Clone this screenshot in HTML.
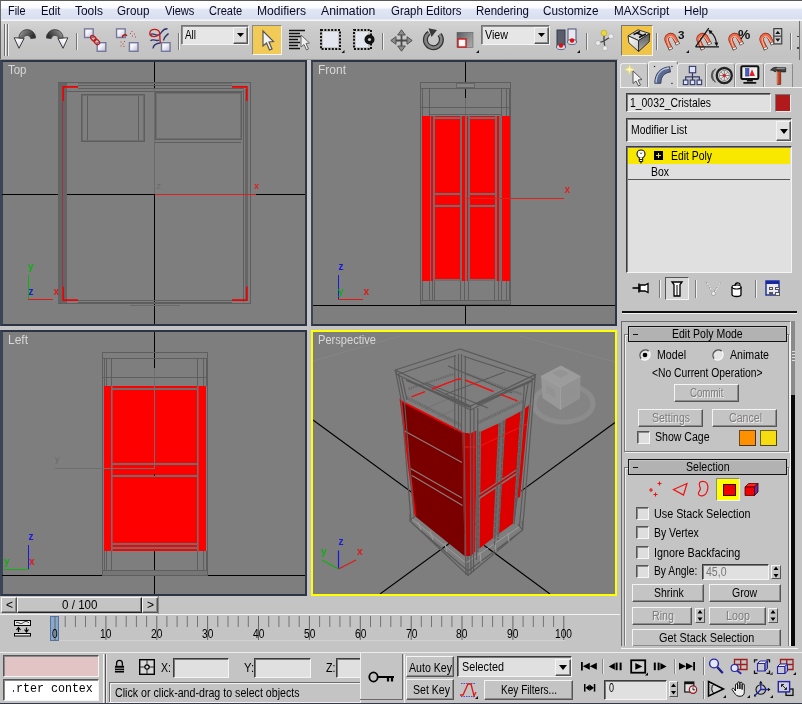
<!DOCTYPE html>
<html><head><meta charset="utf-8"><title>3ds Max</title>
<style>
*{box-sizing:border-box;margin:0;padding:0}
html,body{width:802px;height:704px;overflow:hidden;background:#c4c4c4;font-family:"Liberation Sans",sans-serif;font-size:12px;color:#000}
body{position:relative}
.t{position:absolute;white-space:nowrap;transform-origin:0 0;line-height:1.149}
.dis{color:#7c7c7c;text-shadow:1px 1px 0 #eee}
svg{position:absolute;overflow:visible}
.btn{background:#c4c4c4;border:1px solid;border-color:#f4f4f4 #555 #555 #f4f4f4;box-shadow:inset -1px -1px 0 #8c8c8c}
.sunk{background:#e0e0e0;border:1px solid;border-color:#3c3c3c #f4f4f4 #f4f4f4 #3c3c3c;box-shadow:inset 1px 1px 0 #7a7a7a}
.chk{background:#dedede;border:1px solid;border-color:#555 #f6f6f6 #f6f6f6 #555;box-shadow:inset 1px 1px 0 #8a8a8a}
.vp{position:absolute;background:#7e7e7e;overflow:hidden}
#all{position:absolute;left:0;top:0;width:802px;height:704px;will-change:transform}

</style></head><body>
<div id="all">
<div class="" style="position:absolute;left:0px;top:0px;width:802px;height:21px;background:linear-gradient(#fff 0%,#fafbfe 34%,#e2e7f5 42%,#d9dff0 88%,#f2f4f9 96%,#f6f7fa 100%);border-top:1px solid #5a5a5a;border-left:1px solid #6a6a6a"></div>
<span class="t " style="left:8.2px;top:4.6px;font-size:12px;color:#0a0a24;transform:scaleX(0.905);">File</span>
<span class="t " style="left:40.6px;top:4.6px;font-size:12px;color:#0a0a24;transform:scaleX(0.933);">Edit</span>
<span class="t " style="left:74.8px;top:4.6px;font-size:12px;color:#0a0a24;transform:scaleX(0.996);">Tools</span>
<span class="t " style="left:117.2px;top:4.6px;font-size:12px;color:#0a0a24;transform:scaleX(0.971);">Group</span>
<span class="t " style="left:164.6px;top:4.6px;font-size:12px;color:#0a0a24;transform:scaleX(0.925);">Views</span>
<span class="t " style="left:208.7px;top:4.6px;font-size:12px;color:#0a0a24;transform:scaleX(0.922);">Create</span>
<span class="t " style="left:256.9px;top:4.6px;font-size:12px;color:#0a0a24;transform:scaleX(1.009);">Modifiers</span>
<span class="t " style="left:321.0px;top:4.6px;font-size:12px;color:#0a0a24;transform:scaleX(1.018);">Animation</span>
<span class="t " style="left:390.5px;top:4.6px;font-size:12px;color:#0a0a24;transform:scaleX(0.952);">Graph Editors</span>
<span class="t " style="left:476.0px;top:4.6px;font-size:12px;color:#0a0a24;transform:scaleX(0.955);">Rendering</span>
<span class="t " style="left:543.3px;top:4.6px;font-size:12px;color:#0a0a24;transform:scaleX(0.979);">Customize</span>
<span class="t " style="left:613.8px;top:4.6px;font-size:12px;color:#0a0a24;transform:scaleX(0.974);">MAXScript</span>
<span class="t " style="left:683.8px;top:4.6px;font-size:12px;color:#0a0a24;transform:scaleX(0.977);">Help</span>
<div class="" style="position:absolute;left:0px;top:21px;width:802px;height:38px;background:linear-gradient(#d4d4d4 0%,#cacaca 30%,#c2c2c2 100%);border-left:1px solid #666"></div>
<div class="" style="position:absolute;left:0px;top:59px;width:618px;height:1px;background:#9a9a9a"></div>
<div class="" style="position:absolute;left:4px;top:24px;width:1px;height:32px;background:#6e6e6e"></div>
<div class="" style="position:absolute;left:5px;top:24px;width:1px;height:32px;background:#f2f2f2"></div>
<div class="" style="position:absolute;left:7px;top:24px;width:1px;height:32px;background:#6e6e6e"></div>
<div class="" style="position:absolute;left:8px;top:24px;width:1px;height:32px;background:#f2f2f2"></div>
<div class="" style="position:absolute;left:76px;top:33px;width:1px;height:17px;background:#777"></div>
<div class="" style="position:absolute;left:77px;top:33px;width:1px;height:17px;background:#eee"></div>
<div class="" style="position:absolute;left:178px;top:33px;width:1px;height:17px;background:#777"></div>
<div class="" style="position:absolute;left:179px;top:33px;width:1px;height:17px;background:#eee"></div>
<div class="" style="position:absolute;left:382px;top:33px;width:1px;height:17px;background:#777"></div>
<div class="" style="position:absolute;left:383px;top:33px;width:1px;height:17px;background:#eee"></div>
<div class="" style="position:absolute;left:586px;top:33px;width:1px;height:17px;background:#777"></div>
<div class="" style="position:absolute;left:587px;top:33px;width:1px;height:17px;background:#eee"></div>
<div class="" style="position:absolute;left:656px;top:33px;width:1px;height:17px;background:#777"></div>
<div class="" style="position:absolute;left:657px;top:33px;width:1px;height:17px;background:#eee"></div>
<div class="" style="position:absolute;left:790px;top:33px;width:1px;height:17px;background:#777"></div>
<div class="" style="position:absolute;left:791px;top:33px;width:1px;height:17px;background:#eee"></div>
<svg width="0" height="0"><defs>
<linearGradient id="gm" x1="0" y1="0" x2="1" y2="0.4"><stop offset="0" stop-color="#c8c8c8"/><stop offset="0.35" stop-color="#7a7a7a"/><stop offset="1" stop-color="#2e2e2e"/></linearGradient>
<linearGradient id="gsc" x1="0" y1="0" x2="1" y2="0.6"><stop offset="0" stop-color="#585c60"/><stop offset="1" stop-color="#a4a4a4"/></linearGradient><linearGradient id="gm2" x1="0" y1="0" x2="1" y2="1"><stop offset="0" stop-color="#fff"/><stop offset="0.4" stop-color="#f4f4fa"/><stop offset="1" stop-color="#b4b8d0"/></linearGradient>
<linearGradient id="gmag" x1="0" y1="0" x2="1" y2="0"><stop offset="0" stop-color="#f08060"/><stop offset="0.5" stop-color="#e05030"/><stop offset="1" stop-color="#a83018"/></linearGradient>
</defs></svg>
<svg style="left:13px;top:28px" width="24" height="22" viewBox="0 0 24 22"><path d="M1.2 9.8 L11.2 10.2 L6 20.3 Z" fill="url(#gm2)" stroke="#3a3a3a" stroke-width="1"/><path d="M5.8 10 A8.4 8.4 0 0 1 22.6 10 L17.8 10.6 A3.9 3.9 0 0 0 10.2 10.2 Z" fill="url(#gm)" stroke="#3a3a3a" stroke-width="0.8"/></svg>
<svg style="left:45px;top:28px" width="24" height="22" viewBox="0 0 24 22"><g transform="translate(24,0) scale(-1,1)"><path d="M1.2 9.8 L11.2 10.2 L6 20.3 Z" fill="url(#gm2)" stroke="#3a3a3a" stroke-width="1"/><path d="M5.8 10 A8.4 8.4 0 0 1 22.6 10 L17.8 10.6 A3.9 3.9 0 0 0 10.2 10.2 Z" fill="url(#gm)" stroke="#3a3a3a" stroke-width="0.8"/></g></svg>
<svg style="left:0;top:0" width="802" height="60"><rect x="84.6" y="28.9" width="8.6" height="8.6" fill="url(#gm2)" stroke="#74789a" stroke-width="1.4"/><rect x="97.2" y="42.7" width="8.6" height="8.6" fill="url(#gm2)" stroke="#74789a" stroke-width="1.4"/><ellipse cx="93.3" cy="38.3" rx="3.2" ry="2.1" transform="rotate(45 93.3 38.3)" fill="none" stroke="#c41818" stroke-width="1.3"/><ellipse cx="96.8" cy="41.9" rx="3.2" ry="2.1" transform="rotate(45 96.8 41.9)" fill="none" stroke="#c41818" stroke-width="1.3"/><rect x="116.6" y="28.9" width="8.6" height="8.6" fill="url(#gm2)" stroke="#74789a" stroke-width="1.4"/><rect x="129.4" y="42.7" width="8.6" height="8.6" fill="url(#gm2)" stroke="#74789a" stroke-width="1.4"/><path d="M122.3 37.5 a2.6 2.6 0 0 1 4.6 -1.8" fill="none" stroke="#b01818" stroke-width="1.5"/><g fill="#c43a3a"><rect x="130" y="33" width="1" height="1"/><rect x="132" y="35.5" width="1" height="1"/><rect x="134" y="33.5" width="1" height="1"/><rect x="131.5" y="31" width="1" height="1"/><rect x="135" y="36.5" width="1" height="1"/><rect x="120.5" y="41.5" width="1" height="1"/><rect x="122.5" y="43.5" width="1" height="1"/><rect x="120.5" y="45.5" width="1" height="1"/><rect x="124" y="41" width="1" height="1"/><rect x="123.5" y="46" width="1" height="1"/></g><path d="M150.5 34.5 C153 32 156 37 159.5 34.5 C162.5 32 162.5 28.5 167.5 28.8 M150.5 40.8 C153 38 156.5 42 159 40 M153 48.5 C153.5 44 157 43.5 160 43 M163.5 40.5 C164 36 166.5 36 168.5 33.5" fill="none" stroke="#2a3474" stroke-width="1.4"/><path d="M160.8 43.5 C159 40 160.5 36 159.5 32.5 C158.5 28.5 150.5 28 149.8 33 C149.3 37 155.5 37.5 158.5 35" fill="none" stroke="#c41818" stroke-width="1.3"/><rect x="161.5" y="42.7" width="8.6" height="8.6" fill="url(#gm2)" stroke="#74789a" stroke-width="1.4"/></svg>
<div class="sunk" style="position:absolute;left:181px;top:25px;width:68px;height:20px;border-color:#747474 #f4f4f4 #f4f4f4 #747474;box-shadow:inset 1px 1px 0 #8e8e8e;background:#e6e6e6"></div>
<span class="t " style="left:185.3px;top:29.4px;font-size:12px;color:#000;transform:scaleX(0.825);">All</span>
<div class="btn" style="position:absolute;left:233px;top:27px;width:15px;height:17px;background:#dedede"><svg style="left:3px;top:5px" width="7" height="4" viewBox="0 0 7 4"><path d="M0 0H7L3.5 4Z" fill="#000"/></svg></div>
<div class="sunk" style="position:absolute;left:481px;top:25px;width:69px;height:20px;border-color:#747474 #f4f4f4 #f4f4f4 #747474;box-shadow:inset 1px 1px 0 #8e8e8e;background:#e6e6e6"></div>
<span class="t " style="left:485.3px;top:29.1px;font-size:12px;color:#000;transform:scaleX(0.892);">View</span>
<div class="btn" style="position:absolute;left:534px;top:27px;width:15px;height:17px;background:#dedede"><svg style="left:3px;top:5px" width="7" height="4" viewBox="0 0 7 4"><path d="M0 0H7L3.5 4Z" fill="#000"/></svg></div>
<div class="" style="position:absolute;left:252px;top:25px;width:30px;height:30px;background:#f2ca58;border:1px solid;border-color:#8a8a8a #f4f4f4 #f4f4f4 #8a8a8a"></div>
<svg style="left:262px;top:30px" width="14" height="22" viewBox="0 0 14 22"><path d="M1 1 L1 16 L4.5 13 L7.5 20 L10 19 L7 12 L11.5 11.5 Z" fill="#f4f4f4" stroke="#555" stroke-width="1.2"/></svg>
<svg style="left:288px;top:29px" width="24" height="23" viewBox="0 0 24 23"><g stroke="#111" stroke-width="1.3"><path d="M1 1.5H17M1 4.5H12M1 7.5H14M1 10.5H10M1 13.5H12M1 16.5H10M1 19.5H12"/></g><path d="M13 6 L13 18 L16 15.5 L18.5 21 L20.5 20 L18 14.5 L21.5 14 Z" fill="#eee" stroke="#666" stroke-width="1"/></svg>
<svg style="left:319px;top:28px" width="25" height="25" viewBox="0 0 25 25"><rect x="4" y="4" width="15" height="15" fill="#e4e6f0"/><rect x="2" y="2" width="19" height="19" fill="none" stroke="#111" stroke-width="2" stroke-dasharray="2 1.4"/><path d="M25.5 22V25H22.5Z" fill="#111"/></svg>
<svg style="left:352px;top:28px" width="25" height="25" viewBox="0 0 25 25"><rect x="4" y="4" width="12" height="15" fill="#e4e6f0"/><rect x="2" y="2" width="17" height="19" fill="none" stroke="#111" stroke-width="2" stroke-dasharray="2 1.4"/><circle cx="17.5" cy="11.5" r="5" fill="#111"/><circle cx="17.5" cy="11.5" r="1.6" fill="#ccc"/></svg>
<svg style="left:390px;top:29px" width="23" height="23" viewBox="0 0 23 23"><path d="M11.5 4 V19 M4 11.5 H19" stroke="#4a4a4a" stroke-width="1.8" fill="none"/><path d="M11.5 0.8 L15.3 6 H7.7 Z M11.5 22.2 L15.3 17 H7.7 Z M0.8 11.5 L6 7.7 V15.3 Z M22.2 11.5 L17 7.7 V15.3 Z" fill="#8c8c8c" stroke="#4a4a4a" stroke-width="0.9"/></svg>
<svg style="left:422px;top:28px" width="23" height="23" viewBox="0 0 23 23"><path d="M7 5 A8 8 0 1 0 17.5 6.5" fill="none" stroke="#333" stroke-width="5"/><path d="M7 5 A8 8 0 1 0 17.5 6.5" fill="none" stroke="#858585" stroke-width="2.6"/><path d="M6.5 0.3 L15 2 L9.5 9 Z" fill="#3a3a3a"/></svg>
<svg style="left:456px;top:31px" width="20" height="20" viewBox="0 0 20 20"><rect x="1" y="1.3" width="16" height="15" fill="url(#gsc)" stroke="#555" stroke-width="0.5"/><rect x="2" y="8" width="8" height="8" fill="#fafafa" stroke="#d01818" stroke-width="1.4"/><path d="M23 19V22H20Z" fill="#111"/></svg>
<svg style="left:556px;top:28px" width="24" height="25" viewBox="0 0 24 25"><rect x="1" y="2" width="8" height="17" fill="#5a5e6a" stroke="#333a50" stroke-width="1"/><rect x="12" y="1" width="8" height="13" fill="#e8e8ee" stroke="#4a5078" stroke-width="1"/><ellipse cx="5" cy="19" rx="4.5" ry="2.6" fill="#dcdce4" stroke="#4a5078" stroke-width="0.8"/><ellipse cx="16" cy="14" rx="4.5" ry="2.6" fill="#dcdce4" stroke="#4a5078" stroke-width="0.8"/><circle cx="5" cy="17.5" r="2.2" fill="#e01010"/><circle cx="16" cy="12.5" r="2.2" fill="#e01010"/><path d="M24 22V25H21Z" fill="#111"/></svg>
<svg style="left:0;top:0" width="802" height="60"><path d="M604 33 L604 41 L598 43 M604 41 L611 36.5 M604 41 L605 48" stroke="#444" stroke-width="1.3" fill="none"/><circle cx="604" cy="33" r="2.9" fill="#ecd838" stroke="#a89820" stroke-width="0.5"/><circle cx="611" cy="36.3" r="2.5" fill="#ececec" stroke="#999" stroke-width="0.5"/><circle cx="598" cy="43" r="2.5" fill="#ececec" stroke="#999" stroke-width="0.5"/><circle cx="605" cy="48.3" r="2.5" fill="#ececec" stroke="#999" stroke-width="0.5"/></svg>
<div class="" style="position:absolute;left:621px;top:25px;width:32px;height:31px;background:#f0c448;border:1px solid;border-color:#777 #f4f4f4 #f4f4f4 #777"></div>
<svg style="left:0;top:0" width="802" height="60"><defs><linearGradient id="kf" x1="0" y1="0" x2="1" y2="1"><stop offset="0" stop-color="#fff"/><stop offset="1" stop-color="#c8c8c8"/></linearGradient><linearGradient id="kr" x1="0" y1="0" x2="0" y2="1"><stop offset="0" stop-color="#555"/><stop offset="1" stop-color="#b0b0b0"/></linearGradient></defs><path d="M628 35.8 L638 29.8 L649.7 33.5 L638.6 40.5 Z" fill="#d8d8d8" stroke="#222" stroke-width="0.9"/><path d="M628 35.8 L638.6 40.5 L638.6 51.5 L628.9 42.8 Z" fill="url(#kf)" stroke="#222" stroke-width="0.9"/><path d="M638.6 40.5 L649.7 33.5 L649.2 41.8 L638.6 51.5 Z" fill="url(#kr)" stroke="#222" stroke-width="0.9"/><path d="M633.5 34.5 L640 31.5 M636.8 33 L642.5 35.5 M639 37.5 L646 34" stroke="#111" stroke-width="1.7" fill="none"/></svg>
<svg style="left:662px;top:27px" width="26" height="27" viewBox="0 0 26 27"><path d="M9 22.5 L5 14.2 C3 9.3 8.5 6 11.8 9.4 L16 17.4" fill="none" stroke="#8a2410" stroke-width="4.2"/><path d="M9 22.5 L5 14.2 C3 9.3 8.5 6 11.8 9.4 L16 17.4" fill="none" stroke="#ee6a48" stroke-width="2.9"/><path d="M7.6 20.5 L5.6 14.5 C4.2 10.5 8.3 7.8 10.8 10.3 L14.6 15.6" fill="none" stroke="#ffc4b0" stroke-width="1"/><path d="M9 22.5 L8 20.4 M16 17.4 L14.9 15.3" fill="none" stroke="#555" stroke-width="4.2"/><path d="M8.8 22 L8.2 20.7 M15.8 17 L15.1 15.7" fill="none" stroke="#fafafa" stroke-width="2.8"/><path d="M27 23V26H24Z" fill="#111"/></svg>
<span class="t " style="left:678.0px;top:28.7px;font-size:10.5px;color:#111;transform:scaleX(1.113);font-weight:bold">3</span>
<svg style="left:693.5px;top:27px" width="26" height="27" viewBox="0 0 26 27"><path d="M9 22.5 L5 14.2 C3 9.3 8.5 6 11.8 9.4 L16 17.4" fill="none" stroke="#8a2410" stroke-width="4.2"/><path d="M9 22.5 L5 14.2 C3 9.3 8.5 6 11.8 9.4 L16 17.4" fill="none" stroke="#ee6a48" stroke-width="2.9"/><path d="M7.6 20.5 L5.6 14.5 C4.2 10.5 8.3 7.8 10.8 10.3 L14.6 15.6" fill="none" stroke="#ffc4b0" stroke-width="1"/><path d="M9 22.5 L8 20.4 M16 17.4 L14.9 15.3" fill="none" stroke="#555" stroke-width="4.2"/><path d="M8.8 22 L8.2 20.7 M15.8 17 L15.1 15.7" fill="none" stroke="#fafafa" stroke-width="2.8"/><path d="M1.5 19.8 H25 M1.5 19.8 L14.8 1.2" stroke="#111" stroke-width="1.2" fill="none"/><path d="M16 4.5 A17 17 0 0 1 22.5 17.5" stroke="#111" stroke-width="1.2" fill="none"/><path d="M14.2 2.8 L18.5 4 L16 7.2 Z M20.3 15.5 L24.3 15.5 L22.8 19.5 Z" fill="#111"/></svg>
<svg style="left:725.6px;top:27px" width="26" height="27" viewBox="0 0 26 27"><path d="M9 22.5 L5 14.2 C3 9.3 8.5 6 11.8 9.4 L16 17.4" fill="none" stroke="#8a2410" stroke-width="4.2"/><path d="M9 22.5 L5 14.2 C3 9.3 8.5 6 11.8 9.4 L16 17.4" fill="none" stroke="#ee6a48" stroke-width="2.9"/><path d="M7.6 20.5 L5.6 14.5 C4.2 10.5 8.3 7.8 10.8 10.3 L14.6 15.6" fill="none" stroke="#ffc4b0" stroke-width="1"/><path d="M9 22.5 L8 20.4 M16 17.4 L14.9 15.3" fill="none" stroke="#555" stroke-width="4.2"/><path d="M8.8 22 L8.2 20.7 M15.8 17 L15.1 15.7" fill="none" stroke="#fafafa" stroke-width="2.8"/></svg>
<span class="t " style="left:738.0px;top:28.2px;font-size:12.5px;color:#111;transform:scaleX(1.107);font-weight:bold">%</span>
<svg style="left:757.3px;top:27px" width="27" height="27" viewBox="0 0 27 27"><path d="M9 22.5 L5 14.2 C3 9.3 8.5 6 11.8 9.4 L16 17.4" fill="none" stroke="#8a2410" stroke-width="4.2"/><path d="M9 22.5 L5 14.2 C3 9.3 8.5 6 11.8 9.4 L16 17.4" fill="none" stroke="#ee6a48" stroke-width="2.9"/><path d="M7.6 20.5 L5.6 14.5 C4.2 10.5 8.3 7.8 10.8 10.3 L14.6 15.6" fill="none" stroke="#ffc4b0" stroke-width="1"/><path d="M9 22.5 L8 20.4 M16 17.4 L14.9 15.3" fill="none" stroke="#555" stroke-width="4.2"/><path d="M8.8 22 L8.2 20.7 M15.8 17 L15.1 15.7" fill="none" stroke="#fafafa" stroke-width="2.8"/><rect x="16.8" y="1.6" width="8" height="15.4" fill="#9c9c9c" stroke="#333" stroke-width="1"/><path d="M16.8 9.2H24.8" stroke="#444"/><rect x="17.8" y="2.6" width="6" height="5.6" fill="#d4d4d4"/><rect x="17.8" y="10.2" width="6" height="5.8" fill="#d4d4d4"/><path d="M18.3 7H23.3L20.8 3.8Z M18.3 11.6H23.3L20.8 14.8Z" fill="#111"/></svg>
<div class="" style="position:absolute;left:799px;top:21px;width:1px;height:39px;background:#707070"></div>
<div class="" style="position:absolute;left:797px;top:36px;width:2px;height:1px;background:#444"></div>
<div class="" style="position:absolute;left:797px;top:47px;width:2px;height:2px;background:#444"></div>
<div class="" style="position:absolute;left:620px;top:63px;width:28px;height:25px;background:#c8c8c8;border:1px solid;border-color:#eee #8a8a8a #f4f4f4 #eee;border-radius:3px 3px 0 0"></div>
<div class="" style="position:absolute;left:648px;top:61px;width:30px;height:27px;background:#d2d2d2;border:1px solid;border-color:#f6f6f6 #6a6a6a transparent #f6f6f6;border-radius:3px 3px 0 0"></div>
<div class="" style="position:absolute;left:677px;top:63px;width:29px;height:25px;background:#c8c8c8;border:1px solid;border-color:#eee #8a8a8a #f4f4f4 #eee;border-radius:3px 3px 0 0"></div>
<div class="" style="position:absolute;left:706px;top:63px;width:29px;height:25px;background:#c8c8c8;border:1px solid;border-color:#eee #8a8a8a #f4f4f4 #eee;border-radius:3px 3px 0 0"></div>
<div class="" style="position:absolute;left:735px;top:63px;width:29px;height:25px;background:#c8c8c8;border:1px solid;border-color:#eee #8a8a8a #f4f4f4 #eee;border-radius:3px 3px 0 0"></div>
<div class="" style="position:absolute;left:764px;top:63px;width:29px;height:25px;background:#c8c8c8;border:1px solid;border-color:#eee #8a8a8a #f4f4f4 #eee;border-radius:3px 3px 0 0"></div>
<div class="" style="position:absolute;left:620px;top:87px;width:28px;height:1px;background:#f4f4f4"></div>
<div class="" style="position:absolute;left:677px;top:87px;width:125px;height:1px;background:#f4f4f4"></div>
<svg style="left:624px;top:64px" width="22" height="22" viewBox="0 0 22 22"><path d="M9 7 L9 19.5 L12 17 L14.5 22 L16.5 21 L14 16 L18 15.5 Z" fill="#f4f4f4" stroke="#555" stroke-width="1"/><path d="M5.5 0 L6.5 4 L10.5 5.5 L6.5 7 L5.5 11 L4.5 7 L0.5 5.5 L4.5 4 Z" fill="#fff8b0" stroke="#e8d860" stroke-width="0.5"/></svg>
<svg style="left:653px;top:65px" width="21" height="20" viewBox="0 0 24 23"><path d="M2 21 C2 10 8 3 19 2 L20 8 C13 9 9 13 9 21 Z" fill="#5a6a90" stroke="#2a3450" stroke-width="1"/><path d="M3.5 20.5 C3.5 11 9 4.5 18.5 3.5" fill="none" stroke="#b8c4e0" stroke-width="1.6"/><g fill="#222"><rect x="1" y="1" width="1.4" height="1.4"/><rect x="21" y="1" width="1.4" height="1.4"/><rect x="21" y="20.5" width="1.4" height="1.4"/></g></svg>
<svg style="left:682px;top:65px" width="21" height="21" viewBox="0 0 22 23"><path d="M11 8 V13 M3.5 17 V13 H18.5 V17 M11 13 V17" stroke="#303868" stroke-width="1.3" fill="none"/><rect x="7.5" y="1.5" width="7" height="7" fill="#dfe2f4" stroke="#303868" stroke-width="1.2"/><rect x="1" y="16.5" width="5" height="5" fill="#dfe2f4" stroke="#303868" stroke-width="1.2"/><rect x="8.5" y="16.5" width="5" height="5" fill="#dfe2f4" stroke="#303868" stroke-width="1.2"/><rect x="16" y="16.5" width="5" height="5" fill="#dfe2f4" stroke="#303868" stroke-width="1.2"/></svg>
<svg style="left:710.5px;top:65px" width="22" height="21" viewBox="0 0 24 23"><path d="M5 4 A10 10 0 0 0 5 19 M2.5 6 A8 8 0 0 0 2.5 17" fill="none" stroke="#555" stroke-width="1.2"/><circle cx="14.5" cy="11.5" r="8.2" fill="#e4e4e4" stroke="#222" stroke-width="2.6"/><circle cx="14.5" cy="11.5" r="5.6" fill="none" stroke="#777" stroke-width="0.8"/><path d="M14.5 6 V17 M9 11.5 H20 M10.6 7.6 L18.4 15.4 M18.4 7.6 L10.6 15.4" stroke="#666" stroke-width="0.8"/><circle cx="14.5" cy="11.5" r="1.8" fill="#e02020"/></svg>
<svg style="left:740px;top:65px" width="20.5" height="19.6" viewBox="0 0 24 23"><rect x="1.5" y="1.5" width="20" height="15" rx="1.5" fill="#f0f0f0" stroke="#111" stroke-width="2.4"/><rect x="6.5" y="4" width="4" height="9" fill="#4860c0" stroke="#203080" stroke-width="0.6"/><path d="M11 13 L14 5 L17.5 13 Z" fill="#e02020"/><path d="M8 17.5 H15 V19.5 H8Z M4 20 H19 V22 H4Z" fill="#111"/></svg>
<svg style="left:769px;top:64.5px" width="20" height="20.5" viewBox="0 0 24 24"><path d="M10 7 H14 V23 H10Z" fill="#c03818" stroke="#601808" stroke-width="0.8"/><path d="M10.5 8 V22.5" stroke="#f09070" stroke-width="1"/><path d="M2 6 C4 2.5 8 2 11 3 H20 V8 H15 L14 6.5 H9 L7.5 8 C5 6 3.5 6 2 6Z" fill="#444" stroke="#111" stroke-width="0.8"/><path d="M9 4 H19" stroke="#aaa" stroke-width="1"/></svg>
<div class="sunk" style="position:absolute;left:626px;top:93px;width:145px;height:19px;"></div>
<span class="t " style="left:630.0px;top:96.6px;font-size:12px;color:#000;transform:scaleX(0.867);">1_0032_Cristales</span>
<div class="" style="position:absolute;left:775px;top:94px;width:16px;height:18px;background:#b01a1a;border:1px solid;border-color:#777 #eee #eee #777"></div>
<div class="sunk" style="position:absolute;left:626px;top:118px;width:166px;height:24px;"></div>
<span class="t " style="left:630.5px;top:124.1px;font-size:12px;color:#000;transform:scaleX(0.866);">Modifier List</span>
<div class="btn" style="position:absolute;left:776px;top:121px;width:15px;height:20px;background:#e2e2e2"><svg style="left:3px;top:7px" width="8" height="5" viewBox="0 0 8 5"><path d="M0 0H8L4 5Z" fill="#000"/></svg></div>
<div class="sunk" style="position:absolute;left:626px;top:146px;width:166px;height:127px;"></div>
<div class="" style="position:absolute;left:628px;top:148px;width:162px;height:16px;background:#f8e800"></div>
<div class="" style="position:absolute;left:628px;top:179px;width:162px;height:1px;background:#555"></div>
<svg style="left:636px;top:149px" width="10" height="15" viewBox="0 0 10 15"><circle cx="5" cy="5" r="4" fill="#fff" stroke="#111" stroke-width="1.1"/><path d="M3.3 8.5 V12.5 H6.7 V8.5" fill="#fff" stroke="#111" stroke-width="1"/><path d="M3.3 10.5 H6.7 M4 13.8 H6" stroke="#111" stroke-width="0.9"/><path d="M4 3.5 L5 5 L6 3.5" stroke="#111" stroke-width="0.6" fill="none"/></svg>
<div class="" style="position:absolute;left:654px;top:151px;width:9px;height:9px;background:#000"></div>
<div class="" style="position:absolute;left:656px;top:155px;width:5px;height:1px;background:#f8e800"></div>
<div class="" style="position:absolute;left:658px;top:153px;width:1px;height:5px;background:#f8e800"></div>
<span class="t " style="left:670.5px;top:149.6px;font-size:12px;color:#000;transform:scaleX(0.866);">Edit Poly</span>
<span class="t " style="left:650.5px;top:165.6px;font-size:12px;color:#000;transform:scaleX(0.870);">Box</span>
<svg style="left:632px;top:281px" width="18" height="14" viewBox="0 0 18 14"><path d="M0.5 7 H7" stroke="#000" stroke-width="1.6"/><path d="M7 2.5 V11.5" stroke="#000" stroke-width="1.6"/><path d="M8 4 H13 L16 2.5 V11.5 L13 10 H8 Z" fill="#fff" stroke="#000" stroke-width="1.3"/></svg>
<div class="" style="position:absolute;left:659px;top:280px;width:1px;height:18px;background:#7a7a7a"></div>
<div class="" style="position:absolute;left:660px;top:280px;width:1px;height:18px;background:#f0f0f0"></div>
<div class="" style="position:absolute;left:695px;top:280px;width:1px;height:18px;background:#7a7a7a"></div>
<div class="" style="position:absolute;left:696px;top:280px;width:1px;height:18px;background:#f0f0f0"></div>
<div class="" style="position:absolute;left:755px;top:280px;width:1px;height:18px;background:#7a7a7a"></div>
<div class="" style="position:absolute;left:756px;top:280px;width:1px;height:18px;background:#f0f0f0"></div>
<div class="" style="position:absolute;left:665px;top:277px;width:24px;height:23px;background:#d6d6d6;border:1px solid;border-color:#555 #f4f4f4 #f4f4f4 #555"></div>
<svg style="left:671px;top:281px" width="12" height="16" viewBox="0 0 12 16"><path d="M1 1 H11 L9 3.5 V15 H3 V3.5 Z" fill="#fff" stroke="#000" stroke-width="1.3"/><path d="M6 4 V15" stroke="#000" stroke-width="1"/></svg>
<svg style="left:705px;top:281px" width="17" height="16" viewBox="0 0 17 16"><path d="M1 1 L8 12 L16 1" fill="none" stroke="#9a9a9a" stroke-width="1.2" stroke-dasharray="2 1"/><path d="M2 2 L9 13 L15 2" fill="none" stroke="#eee" stroke-width="1" stroke-dasharray="2 1"/><circle cx="8.5" cy="12.5" r="2" fill="#eee" stroke="#999" stroke-width="0.8"/></svg>
<svg style="left:730px;top:281px" width="13" height="16" viewBox="0 0 13 16"><path d="M2 6 V13.5 A4.5 2 0 0 0 11 13.5 V6" fill="#fff" stroke="#000" stroke-width="1.3"/><ellipse cx="6.5" cy="6" rx="4.5" ry="2" fill="#fff" stroke="#000" stroke-width="1.2"/><path d="M5 5 C5 1 10 1 10 4" fill="none" stroke="#000" stroke-width="1.2"/></svg>
<svg style="left:765px;top:280px" width="17" height="18" viewBox="0 0 17 18"><rect x="1" y="1" width="13" height="14" fill="#e8e8f4" stroke="#1828a0" stroke-width="1.4"/><rect x="1" y="1" width="13" height="3" fill="#1828a0"/><g fill="#555"><rect x="4" y="7" width="4" height="3"/><rect x="10" y="7" width="5" height="3"/><rect x="4" y="12" width="4" height="3"/><rect x="10" y="12" width="5" height="4"/></g><g fill="#eee"><rect x="11" y="8" width="3" height="1"/><rect x="11" y="13" width="3" height="2"/><rect x="5" y="8" width="2" height="1"/></g></svg>
<div class="" style="position:absolute;left:622px;top:311px;width:175px;height:2px;background:#111"></div>
<div class="" style="position:absolute;left:622px;top:313px;width:175px;height:1px;background:#f2f2f2"></div>
<div class="" style="position:absolute;left:621px;top:321px;width:170px;height:326px;border:1px solid;border-color:#6a6a6a #f4f4f4 transparent #6a6a6a"></div>
<div class="" style="position:absolute;left:791px;top:321px;width:4px;height:74px;background:#8a8a8a"></div>
<div class="" style="position:absolute;left:791px;top:395px;width:4px;height:251px;background:#0a0a0a"></div>
<div class="" style="position:absolute;left:792px;top:351px;width:3px;height:1px;background:#ddd"></div>
<div class="" style="position:absolute;left:792px;top:354px;width:3px;height:1px;background:#ddd"></div>
<div class="" style="position:absolute;left:792px;top:357px;width:3px;height:1px;background:#ddd"></div>
<div class="" style="position:absolute;left:792px;top:360px;width:3px;height:1px;background:#ddd"></div>
<div class="" style="position:absolute;left:624px;top:334px;width:165px;height:118px;border:1px solid #7a7a7a;box-shadow:1px 1px 0 #f0f0f0, inset 1px 1px 0 #f0f0f0"></div>
<div class="" style="position:absolute;left:628px;top:326px;width:159px;height:16px;background:#b2b2b2;border:1px solid #111;box-shadow:inset 1px 1px 0 #c6c6c6"></div>
<div class="" style="position:absolute;left:633px;top:334px;width:5px;height:1px;background:#111"></div>
<span class="t " style="left:672.4px;top:328.1px;font-size:12px;color:#000;transform:scaleX(0.876);">Edit Poly Mode</span>
<svg style="left:638.5px;top:348.5px" width="12" height="12" viewBox="0 0 12 12"><circle cx="6" cy="6" r="5" fill="#e4e4e4"/><path d="M2.2 9.8 A5.4 5.4 0 0 1 9.8 2.2" fill="none" stroke="#555" stroke-width="1.4"/><path d="M9.8 2.2 A5.4 5.4 0 0 1 2.2 9.8" fill="none" stroke="#f8f8f8" stroke-width="1.4"/><circle cx="6" cy="6" r="2.3" fill="#000"/></svg>
<span class="t " style="left:656.6px;top:348.6px;font-size:12px;color:#000;transform:scaleX(0.887);">Model</span>
<svg style="left:711.5px;top:348.5px" width="12" height="12" viewBox="0 0 12 12"><circle cx="6" cy="6" r="5" fill="#e4e4e4"/><path d="M2.2 9.8 A5.4 5.4 0 0 1 9.8 2.2" fill="none" stroke="#555" stroke-width="1.4"/><path d="M9.8 2.2 A5.4 5.4 0 0 1 2.2 9.8" fill="none" stroke="#f8f8f8" stroke-width="1.4"/></svg>
<span class="t " style="left:729.5px;top:348.6px;font-size:12px;color:#000;transform:scaleX(0.886);">Animate</span>
<span class="t " style="left:652.0px;top:366.6px;font-size:12px;color:#000;transform:scaleX(0.859);">&lt;No Current Operation&gt;</span>
<div class="btn" style="position:absolute;left:674px;top:384px;width:65px;height:18px;"></div>
<span class="t dis" style="left:689.7px;top:386.6px;font-size:12px;color:#7c7c7c;transform:scaleX(0.806);">Commit</span>
<div class="btn" style="position:absolute;left:638px;top:409px;width:65px;height:18px;"></div>
<span class="t dis" style="left:651.5px;top:411.6px;font-size:12px;color:#7c7c7c;transform:scaleX(0.876);">Settings</span>
<div class="btn" style="position:absolute;left:712px;top:409px;width:65px;height:18px;"></div>
<span class="t dis" style="left:728.5px;top:411.6px;font-size:12px;color:#7c7c7c;transform:scaleX(0.886);">Cancel</span>
<div class="chk" style="position:absolute;left:637px;top:431px;width:13px;height:13px;"></div>
<span class="t " style="left:655.4px;top:431.1px;font-size:12px;color:#000;transform:scaleX(0.880);">Show Cage</span>
<div class="" style="position:absolute;left:739px;top:430px;width:17px;height:16px;background:#ff9000;border:1px solid;border-color:#6a4a20 #4a3010 #4a3010 #6a4a20"></div>
<div class="" style="position:absolute;left:760px;top:430px;width:17px;height:16px;background:#f6dc10;border:1px solid;border-color:#6a6420 #4a4410 #4a4410 #6a6420"></div>
<div class="" style="position:absolute;left:624px;top:467px;width:165px;height:185px;border:1px solid #7a7a7a;box-shadow:1px 1px 0 #f0f0f0, inset 1px 1px 0 #f0f0f0"></div>
<div class="" style="position:absolute;left:628px;top:459px;width:159px;height:16px;background:#b2b2b2;border:1px solid #111;box-shadow:inset 1px 1px 0 #c6c6c6"></div>
<div class="" style="position:absolute;left:633px;top:467px;width:5px;height:1px;background:#111"></div>
<span class="t " style="left:685.6px;top:461.1px;font-size:12px;color:#000;transform:scaleX(0.883);">Selection</span>
<svg style="left:648px;top:481px" width="17" height="17" viewBox="0 0 17 17"><g stroke="#f01010" stroke-width="1.1"><path d="M9.5 2.5 H13.5 M11.5 0.5 V4.5 M1 9 H5 M3 7 V11 M5.5 13.5 H9.5 M7.5 11.5 V15.5"/></g></svg>
<svg style="left:672px;top:482px" width="17" height="15" viewBox="0 0 17 15"><path d="M1.5 7.5 L15 1.5 L11.5 13 Z" fill="none" stroke="#f01010" stroke-width="1.2"/></svg>
<svg style="left:696px;top:480px" width="14" height="18" viewBox="0 0 14 18"><path d="M3.5 3 C4.5 0.8 9.5 0.8 11 3.5 C12.5 6.5 11.5 11 10 13.5 C8.5 16.3 4 16.5 2.6 14.5 C1.2 12.5 4.8 10.5 4.4 8.5 C4 6.5 2.6 5 3.5 3 Z" fill="none" stroke="#f01010" stroke-width="1.2"/></svg>
<div class="" style="position:absolute;left:716px;top:478px;width:24px;height:23px;background:#ffff00;border:1px solid;border-color:#8a8a8a #f4f4f4 #f4f4f4 #8a8a8a"></div>
<div class="" style="position:absolute;left:723px;top:484px;width:13px;height:12px;background:#f00000;border:1px solid #3a0a0a"></div>
<svg style="left:744px;top:482px" width="15" height="15" viewBox="0 0 15 15"><path d="M1 5 L4.5 1.5 H14 L10.5 5 Z" fill="#ff2020" stroke="#500" stroke-width="0.8"/><path d="M1 5 H10.5 V13.5 H1 Z" fill="#f00000" stroke="#500" stroke-width="0.8"/><path d="M10.5 5 L14 1.5 V10 L10.5 13.5 Z" fill="#8020a0" stroke="#300" stroke-width="0.8"/></svg>
<div class="chk" style="position:absolute;left:636px;top:507px;width:13px;height:13px;"></div>
<span class="t " style="left:653.6px;top:507.6px;font-size:12px;color:#000;transform:scaleX(0.898);">Use Stack Selection</span>
<div class="chk" style="position:absolute;left:636px;top:526px;width:13px;height:13px;"></div>
<span class="t " style="left:653.6px;top:526.6px;font-size:12px;color:#000;transform:scaleX(0.870);">By Vertex</span>
<div class="chk" style="position:absolute;left:636px;top:546px;width:13px;height:13px;"></div>
<span class="t " style="left:653.6px;top:546.6px;font-size:12px;color:#000;transform:scaleX(0.899);">Ignore Backfacing</span>
<div class="chk" style="position:absolute;left:636px;top:565px;width:13px;height:13px;"></div>
<span class="t " style="left:653.6px;top:565.1px;font-size:12px;color:#000;transform:scaleX(0.856);">By Angle:</span>
<div class="sunk" style="position:absolute;left:702px;top:564px;width:67px;height:16px;"></div>
<span class="t " style="left:705.5px;top:565.6px;font-size:12px;color:#777;transform:scaleX(0.878);">45,0</span>
<div class="" style="position:absolute;left:771px;top:565px;width:10px;height:14px;background:#c4c4c4;border:1px solid;border-color:#f4f4f4 #555 #555 #f4f4f4"></div>
<svg style="left:771px;top:565px" width="10" height="14" viewBox="0 0 10 14"><path d="M2.5 5.0 H7.5 L5.0 1.5Z M2.5 9.0 H7.5 L5.0 12.5Z" fill="#000"/></svg>
<div class="btn" style="position:absolute;left:632px;top:584px;width:72px;height:18px;"></div>
<span class="t " style="left:653.6px;top:587.1px;font-size:12px;color:#000;transform:scaleX(0.873);">Shrink</span>
<div class="btn" style="position:absolute;left:709px;top:584px;width:72px;height:18px;"></div>
<span class="t " style="left:732.4px;top:587.1px;font-size:12px;color:#000;transform:scaleX(0.875);">Grow</span>
<div class="btn" style="position:absolute;left:632px;top:607px;width:60px;height:18px;"></div>
<span class="t dis" style="left:651.5px;top:610.1px;font-size:12px;color:#7c7c7c;transform:scaleX(0.891);">Ring</span>
<div class="" style="position:absolute;left:695px;top:608px;width:10px;height:15px;background:#c4c4c4;border:1px solid;border-color:#f4f4f4 #555 #555 #f4f4f4"></div>
<svg style="left:695px;top:608px" width="10" height="15" viewBox="0 0 10 15"><path d="M2.5 5.5 H7.5 L5.0 2.0Z M2.5 9.5 H7.5 L5.0 13.0Z" fill="#000"/></svg>
<div class="btn" style="position:absolute;left:709px;top:607px;width:57px;height:18px;"></div>
<span class="t dis" style="left:725.5px;top:610.1px;font-size:12px;color:#7c7c7c;transform:scaleX(0.895);">Loop</span>
<div class="" style="position:absolute;left:768px;top:608px;width:10px;height:15px;background:#c4c4c4;border:1px solid;border-color:#f4f4f4 #555 #555 #f4f4f4"></div>
<svg style="left:768px;top:608px" width="10" height="15" viewBox="0 0 10 15"><path d="M2.5 5.5 H7.5 L5.0 2.0Z M2.5 9.5 H7.5 L5.0 13.0Z" fill="#000"/></svg>
<div class="btn" style="position:absolute;left:632px;top:629px;width:149px;height:18px;"></div>
<span class="t " style="left:659.4px;top:631.6px;font-size:12px;color:#000;transform:scaleX(0.904);">Get Stack Selection</span>
<div class="" style="position:absolute;left:620px;top:646px;width:182px;height:8px;background:#c4c4c4"></div>
<div class="" style="position:absolute;left:621px;top:648px;width:177px;height:1px;background:#f4f4f4"></div>
<div class="" style="position:absolute;left:0px;top:596px;width:620px;height:18px;background:#c4c4c4"></div>
<div class="btn" style="position:absolute;left:1px;top:597px;width:16px;height:16px;"></div>
<span class="t " style="left:5.5px;top:599.1px;font-size:12px;color:#000;transform:scaleX(0.999);">&lt;</span>
<div class="" style="position:absolute;left:17px;top:597px;width:125px;height:16px;background:#c4c4c4;border:1px solid;border-color:#f4f4f4 #222 #222 #f4f4f4;box-shadow:inset -1px -1px 0 #777"></div>
<span class="t " style="left:62.0px;top:599.1px;font-size:12px;color:#000;transform:scaleX(0.967);">0 / 100</span>
<div class="btn" style="position:absolute;left:142px;top:597px;width:16px;height:16px;"></div>
<span class="t " style="left:146.5px;top:599.1px;font-size:12px;color:#000;transform:scaleX(0.999);">&gt;</span>
<div class="" style="position:absolute;left:158px;top:596px;width:1px;height:18px;background:#8a8a8a"></div>
<div class="" style="position:absolute;left:0px;top:614px;width:620px;height:1px;background:#f2f2f2"></div>
<div class="" style="position:absolute;left:50px;top:616px;width:9px;height:25px;background:#88a8cc;border:1px solid #54749a"></div>
<svg style="left:0;top:0" width="620" height="704"><rect x="54.5" y="616" width="1" height="25" fill="#666"/><rect x="64.7" y="616" width="1" height="11" fill="#747474"/><rect x="74.9" y="616" width="1" height="11" fill="#747474"/><rect x="85.0" y="616" width="1" height="11" fill="#747474"/><rect x="95.2" y="616" width="1" height="11" fill="#747474"/><rect x="105.4" y="616" width="1" height="25" fill="#666"/><rect x="115.6" y="616" width="1" height="11" fill="#747474"/><rect x="125.7" y="616" width="1" height="11" fill="#747474"/><rect x="135.9" y="616" width="1" height="11" fill="#747474"/><rect x="146.1" y="616" width="1" height="11" fill="#747474"/><rect x="156.3" y="616" width="1" height="25" fill="#666"/><rect x="166.4" y="616" width="1" height="11" fill="#747474"/><rect x="176.6" y="616" width="1" height="11" fill="#747474"/><rect x="186.8" y="616" width="1" height="11" fill="#747474"/><rect x="197.0" y="616" width="1" height="11" fill="#747474"/><rect x="207.1" y="616" width="1" height="25" fill="#666"/><rect x="217.3" y="616" width="1" height="11" fill="#747474"/><rect x="227.5" y="616" width="1" height="11" fill="#747474"/><rect x="237.7" y="616" width="1" height="11" fill="#747474"/><rect x="247.8" y="616" width="1" height="11" fill="#747474"/><rect x="258.0" y="616" width="1" height="25" fill="#666"/><rect x="268.2" y="616" width="1" height="11" fill="#747474"/><rect x="278.4" y="616" width="1" height="11" fill="#747474"/><rect x="288.5" y="616" width="1" height="11" fill="#747474"/><rect x="298.7" y="616" width="1" height="11" fill="#747474"/><rect x="308.9" y="616" width="1" height="25" fill="#666"/><rect x="319.1" y="616" width="1" height="11" fill="#747474"/><rect x="329.3" y="616" width="1" height="11" fill="#747474"/><rect x="339.4" y="616" width="1" height="11" fill="#747474"/><rect x="349.6" y="616" width="1" height="11" fill="#747474"/><rect x="359.8" y="616" width="1" height="25" fill="#666"/><rect x="370.0" y="616" width="1" height="11" fill="#747474"/><rect x="380.1" y="616" width="1" height="11" fill="#747474"/><rect x="390.3" y="616" width="1" height="11" fill="#747474"/><rect x="400.5" y="616" width="1" height="11" fill="#747474"/><rect x="410.7" y="616" width="1" height="25" fill="#666"/><rect x="420.8" y="616" width="1" height="11" fill="#747474"/><rect x="431.0" y="616" width="1" height="11" fill="#747474"/><rect x="441.2" y="616" width="1" height="11" fill="#747474"/><rect x="451.4" y="616" width="1" height="11" fill="#747474"/><rect x="461.5" y="616" width="1" height="25" fill="#666"/><rect x="471.7" y="616" width="1" height="11" fill="#747474"/><rect x="481.9" y="616" width="1" height="11" fill="#747474"/><rect x="492.1" y="616" width="1" height="11" fill="#747474"/><rect x="502.2" y="616" width="1" height="11" fill="#747474"/><rect x="512.4" y="616" width="1" height="25" fill="#666"/><rect x="522.6" y="616" width="1" height="11" fill="#747474"/><rect x="532.8" y="616" width="1" height="11" fill="#747474"/><rect x="542.9" y="616" width="1" height="11" fill="#747474"/><rect x="553.1" y="616" width="1" height="11" fill="#747474"/><rect x="563.3" y="616" width="1" height="25" fill="#666"/></svg>
<span class="t " style="left:52.2px;top:627.6px;font-size:12px;color:#000;transform:scaleX(0.839);">0</span>
<span class="t " style="left:100.2px;top:627.6px;font-size:12px;color:#000;transform:scaleX(0.847);">10</span>
<span class="t " style="left:151.1px;top:627.6px;font-size:12px;color:#000;transform:scaleX(0.847);">20</span>
<span class="t " style="left:202.0px;top:627.6px;font-size:12px;color:#000;transform:scaleX(0.847);">30</span>
<span class="t " style="left:252.9px;top:627.6px;font-size:12px;color:#000;transform:scaleX(0.847);">40</span>
<span class="t " style="left:303.8px;top:627.6px;font-size:12px;color:#000;transform:scaleX(0.847);">50</span>
<span class="t " style="left:354.6px;top:627.6px;font-size:12px;color:#000;transform:scaleX(0.847);">60</span>
<span class="t " style="left:405.5px;top:627.6px;font-size:12px;color:#000;transform:scaleX(0.847);">70</span>
<span class="t " style="left:456.4px;top:627.6px;font-size:12px;color:#000;transform:scaleX(0.847);">80</span>
<span class="t " style="left:507.3px;top:627.6px;font-size:12px;color:#000;transform:scaleX(0.847);">90</span>
<span class="t " style="left:555.3px;top:627.6px;font-size:12px;color:#000;transform:scaleX(0.849);">100</span>
<div class="" style="position:absolute;left:59px;top:640px;width:506px;height:1px;background:#d2d2d2"></div>
<div class="" style="position:absolute;left:405px;top:652px;width:163px;height:1px;background:#e8e8e8"></div>
<svg style="left:14px;top:620px" width="18" height="17" viewBox="0 0 18 17"><rect x="0.5" y="0.5" width="16" height="5" fill="#e8e8e8" stroke="#000" stroke-width="1"/><path d="M2 3 C4 1 6 5 8.5 3 S13 1 15 3" fill="none" stroke="#000" stroke-width="0.8"/><rect x="0.5" y="13.5" width="16" height="2.5" fill="#e8e8e8" stroke="#000" stroke-width="1"/><path d="M4.5 12 V8 M2.5 10 L4.5 7.5 L6.5 10 M12.5 7.5 V11.5 M10.5 9.5 L12.5 12 L14.5 9.5" fill="none" stroke="#000" stroke-width="1.2"/></svg>
<div class="" style="position:absolute;left:0px;top:652px;width:802px;height:1px;background:#ececec"></div>
<div class="" style="position:absolute;left:3px;top:655px;width:96px;height:22px;background:#e2c4c4;border:1px solid;border-color:#555 #f4f4f4 #f4f4f4 #555;box-shadow:inset 1px 1px 0 #8a8a8a"></div>
<div class="" style="position:absolute;left:3px;top:679px;width:96px;height:22px;background:#fff;border:1px solid;border-color:#555 #f4f4f4 #f4f4f4 #555;box-shadow:inset 1px 1px 0 #8a8a8a"></div>
<span class="t" style="left:15.5px;top:683px;font-family:'Liberation Mono',monospace;font-size:12px;transform:scaleX(0.97)">rter contex</span>
<div class="" style="position:absolute;left:13px;top:690px;width:1px;height:2px;background:#1a3a9a"></div>
<div class="" style="position:absolute;left:103px;top:654px;width:1px;height:50px;background:#f4f4f4"></div>
<div class="" style="position:absolute;left:105px;top:654px;width:1px;height:50px;background:#555"></div>
<div class="" style="position:absolute;left:106px;top:654px;width:1px;height:50px;background:#e8e8e8"></div>
<svg style="left:114px;top:660px" width="11" height="13.5" viewBox="0 0 11 14"><path d="M2.5 6 V3.5 A3 3 0 0 1 8.5 3.5 V6" fill="none" stroke="#000" stroke-width="1.3"/><rect x="0.8" y="6" width="9.4" height="7" fill="#000"/><path d="M1 8.5 H10 M1 10.8 H10" stroke="#c4c4c4" stroke-width="0.9"/></svg>
<svg style="left:139px;top:659px" width="16" height="16" viewBox="0 0 16 16"><rect x="0.7" y="0.7" width="14.6" height="14.6" fill="#d8d8d8" stroke="#000" stroke-width="1.4"/><path d="M8 1 V15 M1 8 H15" stroke="#000" stroke-width="0.8"/><circle cx="8" cy="8" r="2.2" fill="#d8d8d8" stroke="#000" stroke-width="1.2"/></svg>
<span class="t " style="left:161.0px;top:661.6px;font-size:12px;color:#000;transform:scaleX(0.882);">X:</span>
<div class="sunk" style="position:absolute;left:173px;top:658px;width:56px;height:20px;"></div>
<span class="t " style="left:243.5px;top:661.6px;font-size:12px;color:#000;transform:scaleX(0.937);">Y:</span>
<div class="sunk" style="position:absolute;left:254px;top:658px;width:57px;height:20px;"></div>
<span class="t " style="left:326.0px;top:661.6px;font-size:12px;color:#000;transform:scaleX(0.891);">Z:</span>
<div class="sunk" style="position:absolute;left:336px;top:658px;width:36px;height:20px;"></div>
<div class="" style="position:absolute;left:109px;top:682px;width:261px;height:22px;border:1px solid;border-color:#6a6a6a transparent transparent #6a6a6a;box-shadow:inset 1px 1px 0 #f4f4f4"></div>
<span class="t " style="left:115.0px;top:686.6px;font-size:12px;color:#000;transform:scaleX(0.887);">Click or click-and-drag to select objects</span>
<div class="" style="position:absolute;left:360px;top:653px;width:43px;height:51px;background:#c4c4c4;border-left:1px solid #eee"></div>
<svg style="left:368px;top:671px" width="27" height="13" viewBox="0 0 27 13"><ellipse cx="5.5" cy="6" rx="4.2" ry="4.6" fill="none" stroke="#000" stroke-width="1.8"/><path d="M10 6 H26 M20 6 V10.5 M24 6 V10.5" stroke="#000" stroke-width="2.2" fill="none"/></svg>
<div class="" style="position:absolute;left:404px;top:654px;width:1px;height:49px;background:#f0f0f0"></div>
<div class="btn" style="position:absolute;left:406px;top:656px;width:48px;height:21px;"></div>
<span class="t " style="left:409.0px;top:661.6px;font-size:12px;color:#000;transform:scaleX(0.883);">Auto Key</span>
<div class="btn" style="position:absolute;left:406px;top:679px;width:48px;height:21px;"></div>
<span class="t " style="left:412.5px;top:684.1px;font-size:12px;color:#000;transform:scaleX(0.880);">Set Key</span>
<div class="sunk" style="position:absolute;left:457px;top:656px;width:115px;height:21px;"></div>
<span class="t " style="left:461.5px;top:661.1px;font-size:12px;color:#000;transform:scaleX(0.899);">Selected</span>
<div class="btn" style="position:absolute;left:555px;top:659px;width:16px;height:17px;background:#e2e2e2"><svg style="left:3px;top:5px" width="8" height="5" viewBox="0 0 8 5"><path d="M0 0H8L4 5Z" fill="#000"/></svg></div>
<svg style="left:459px;top:681px" width="20" height="19" viewBox="0 0 20 19"><path d="M2 2.5 H16 M2 15.5 H16" stroke="#4a50d0" stroke-width="1.2" stroke-dasharray="1.5 1"/><path d="M1 14 L4 14 L9 3 L12 3 L15 15 L17 11" fill="none" stroke="#e01818" stroke-width="1.3"/><path d="M19 15 V18 H16Z" fill="#111"/></svg>
<div class="btn" style="position:absolute;left:484px;top:680px;width:89px;height:20px;"></div>
<span class="t " style="left:500.5px;top:684.1px;font-size:12px;color:#000;transform:scaleX(0.840);">Key Filters...</span>
<svg style="left:0;top:0" width="802" height="704"><g fill="#000"><rect x="581" y="662" width="1.8" height="8.5"/><path d="M589.8 662.8 V669.8 L582.8 666.3Z M596.8 662.8 V669.8 L589.8 666.3Z"/><path d="M614.8 663 V669.8 L608.8 666.4Z"/><rect x="615.6" y="662.6" width="2" height="7.6"/><rect x="619.6" y="662.6" width="2" height="7.6"/><rect x="631.2" y="660.3" width="14" height="12.4" fill="#d0d0d0" stroke="#000" stroke-width="1.8"/><path d="M635.3 663 V669.8 L642.3 666.4Z"/><path d="M648 672.5 V675.5 H645Z"/><rect x="653.8" y="662.6" width="2" height="7.6"/><rect x="657.6" y="662.6" width="2" height="7.6"/><path d="M660.4 663 V669.8 L666.6 666.4Z"/><path d="M679 662.8 V669.8 L686 666.3Z M686 662.8 V669.8 L693 666.3Z"/><rect x="693.2" y="662" width="1.8" height="8.5"/><rect x="584" y="684" width="1.5" height="7.6"/><path d="M589.8 684.6 V691.0 L585.5 687.8000000000001Z M589.6 684.6 V691.0 L593.9 687.8000000000001Z"/><rect x="593.8" y="684" width="1.5" height="7.6"/><rect x="587" y="687.2" width="6" height="1.2"/></g></svg>
<div class="" style="position:absolute;left:703px;top:657px;width:1px;height:18px;background:#7a7a7a"></div>
<div class="" style="position:absolute;left:704px;top:657px;width:1px;height:18px;background:#f0f0f0"></div>
<div class="" style="position:absolute;left:703px;top:681px;width:1px;height:18px;background:#7a7a7a"></div>
<div class="" style="position:absolute;left:704px;top:681px;width:1px;height:18px;background:#f0f0f0"></div>
<div class="" style="position:absolute;left:602px;top:659px;width:1px;height:15px;background:#8a8a8a"></div>
<div class="" style="position:absolute;left:603px;top:659px;width:1px;height:15px;background:#e8e8e8"></div>
<div class="" style="position:absolute;left:674px;top:659px;width:1px;height:15px;background:#8a8a8a"></div>
<div class="" style="position:absolute;left:675px;top:659px;width:1px;height:15px;background:#e8e8e8"></div>
<div class="sunk" style="position:absolute;left:604px;top:680px;width:63px;height:20px;"></div>
<span class="t " style="left:609.0px;top:682.1px;font-size:12px;color:#000;transform:scaleX(0.749);">0</span>
<div class="" style="position:absolute;left:669px;top:681px;width:9px;height:16px;background:#c4c4c4;border:1px solid;border-color:#f4f4f4 #555 #555 #f4f4f4"></div>
<svg style="left:669px;top:681px" width="9" height="16" viewBox="0 0 9 16"><path d="M2.0 6.0 H7.0 L4.5 2.5Z M2.0 10.0 H7.0 L4.5 13.5Z" fill="#000"/></svg>
<svg style="left:684px;top:681px" width="15" height="14" viewBox="0 0 15 14"><rect x="0.8" y="1" width="9" height="10" fill="#e0e0e0" stroke="#111" stroke-width="1.2"/><rect x="0.8" y="1" width="9" height="2.2" fill="#111"/><circle cx="9" cy="8.6" r="3.7" fill="#e4e4e4" stroke="#981828" stroke-width="1.2"/><path d="M9 6.4 V8.8 H11" stroke="#111" stroke-width="0.9" fill="none"/></svg>
<svg style="left:0;top:0" width="802" height="704"><circle cx="714" cy="663.5" r="4.4" fill="#e4e8f4" stroke="#2424a8" stroke-width="1.4"/><path d="M717.3 667 L722.8 673" stroke="#2424a8" stroke-width="2.2"/><path d="M716.8 667.5 L722 673.4" stroke="#111" stroke-width="0.7"/><path d="M734.5 659.5 H747 V669.5 H734.5 Z M740.7 659.5 V669.5 M734.5 664.5 H747" fill="none" stroke="#a01c1c" stroke-width="1.3"/><circle cx="734.6" cy="668" r="3.5" fill="#e4e8f4" stroke="#2424a8" stroke-width="1.2"/><path d="M737.2 670.8 L741.3 673.8" stroke="#2424a8" stroke-width="1.8"/><path d="M754.5 662.5 V659.8 H757.5 M766.5 659.8 H769.5 V662.5 M754.5 670.5 V673.3 H757.5 M766.5 673.3 H769.5 V670.5" fill="none" stroke="#111" stroke-width="1.3"/><path d="M757.5 663.5 H765 V671 H757.5 Z" fill="#c8c8d0" stroke="#2424a8" stroke-width="1.1"/><path d="M757.5 663.5 L760 661 H767.5 L765 663.5 Z" fill="#f4f4f8" stroke="#2424a8" stroke-width="1"/><path d="M765 663.5 L767.5 661 V668.5 L765 671 Z" fill="#8a8a92" stroke="#2424a8" stroke-width="1"/><path d="M772.5 672 V675 H769.5Z" fill="#111"/><path d="M771.5 673.2 V674.4 H770.4Z" fill="#fff"/><path d="M780.5 659.5 H793 V669.5 H780.5 Z M786.7 659.5 V669.5 M780.5 664.5 H793" fill="none" stroke="#a01c1c" stroke-width="1.3"/><path d="M777.5 666.5 H785 V673.5 H777.5 Z" fill="#c8c8d0" stroke="#2424a8" stroke-width="1.1"/><path d="M777.5 666.5 L780 664 H787.5 L785 666.5 Z" fill="#e8e8f0" stroke="#2424a8" stroke-width="1"/><path d="M785 666.5 L787.5 664 V671 L785 673.5 Z" fill="#b0b0b8" stroke="#2424a8" stroke-width="1"/><path d="M796 672 V675 H793Z" fill="#111"/><path d="M708.5 681.5 L723.5 689 L708.5 696 Z" fill="#d8d8d8" stroke="#000" stroke-width="1.5" stroke-linejoin="miter"/><path d="M713.5 684.5 A6 6 0 0 0 713.5 693" fill="none" stroke="#000" stroke-width="1"/><path d="M709.5 684 V694 M711 685 V693" stroke="#555" stroke-width="0.7" stroke-dasharray="0.8 0.8"/><path d="M726 695 V698 H723Z" fill="#111"/><path d="M735.5 691 V685 a1.1 1.1 0 0 1 2.2 0 V689 V683 a1.1 1.1 0 0 1 2.2 0 V689 V683.3 a1.1 1.1 0 0 1 2.2 0 V689.5 V685 a1.1 1.1 0 0 1 2.2 0 V691.5 C744.5 694.5 743 696.3 740 696.3 C737 696.3 735.7 695 734.3 692.8 L732 689.5 a1.1 1.1 0 0 1 1.8 -1 Z" fill="#f0f0f0" stroke="#000" stroke-width="0.9"/><path d="M750 695 V698 H747Z" fill="#111"/><circle cx="760.8" cy="689.5" r="4.8" fill="none" stroke="#111" stroke-width="1.1"/><path d="M760.8 682 V689.5 H769 M760.8 689.5 L755 695.5" stroke="#2424a8" stroke-width="1.3" fill="none"/><path d="M759 683.5 L760.8 680.8 L762.6 683.5Z M768 687.8 L770.5 689.5 L768 691.2Z M754 694 L754 696.5 L756.5 696.5Z" fill="#111"/><path d="M773 695 V698 H770Z" fill="#111"/><rect x="786" y="689" width="7" height="6.4" fill="#c4c4c4" stroke="#111" stroke-width="1.3"/><rect x="778.3" y="681.6" width="11.3" height="10.3" fill="#d0d0dc" stroke="#2424a8" stroke-width="1.4"/><path d="M781.5 684.5 L786.5 689.5 M781.5 684.5 H784 M781.5 684.5 V687 M786.5 689.5 H784.3 M786.5 689.5 V687.3" stroke="#111" stroke-width="0.9" fill="none"/></svg>
<div class="" style="position:absolute;left:0px;top:703px;width:802px;height:1px;background:#343a48"></div>
<div class="" style="position:absolute;left:109px;top:702px;width:251px;height:1px;background:#f0f0f0"></div>
<div class="" style="position:absolute;left:360px;top:699px;width:43px;height:1px;background:#6a6a6a"></div>
<div class="" style="position:absolute;left:402px;top:654px;width:1px;height:46px;background:#6a6a6a"></div>
<div class="" style="position:absolute;left:0px;top:60px;width:307px;height:266px;background:#7e7e7e;border:2px solid;border-color:#2c3446 #2c3446 #2c3446 #3a4658;border-left-width:3px"></div>
<div class="" style="position:absolute;left:311px;top:60px;width:306px;height:266px;background:#7e7e7e;border:2px solid;border-color:#2c3446 #2c3446 #2c3446 #3a4658;border-left-width:2px"></div>
<div class="" style="position:absolute;left:0px;top:330px;width:307px;height:266px;background:#7e7e7e;border:2px solid;border-color:#2c3446 #2c3446 #2c3446 #3a4658;border-left-width:3px"></div>
<div class="" style="position:absolute;left:311px;top:330px;width:306px;height:266px;background:#7e7e7e;border:2px solid #ffff00"></div>
<svg style="left:0;top:0" width="802" height="704" shape-rendering="crispEdges"><defs><clipPath id="c1"><rect x="2" y="62" width="303" height="262"/></clipPath><clipPath id="c2"><rect x="313" y="62" width="302" height="262"/></clipPath><clipPath id="c3"><rect x="2" y="332" width="303" height="262"/></clipPath><clipPath id="c4"><rect x="313" y="332" width="302" height="262"/></clipPath></defs><g clip-path="url(#c1)"><rect x="2" y="194" width="303" height="1" fill="#000"/><rect x="154" y="62" width="1" height="27" fill="#000"/><rect x="154" y="194" width="1" height="130" fill="#000"/><rect x="154" y="89" width="1" height="105" fill="#6a6a6a"/><rect x="58.5" y="82.5" width="192" height="221" fill="none" stroke="#5e5e5e" stroke-width="1"/><rect x="58" y="83" width="9" height="220" fill="#646464"/><rect x="245" y="89" width="3" height="212" fill="#666"/><rect x="243" y="90" width="1" height="212" fill="#5e5e5e"/><rect x="250" y="84" width="1" height="218" fill="#5e5e5e"/><rect x="62" y="101" width="1" height="185" fill="#a03048"/><rect x="78" y="85" width="154" height="1" fill="#5e5e5e"/><rect x="78" y="88" width="166" height="1" fill="#5e5e5e"/><rect x="66" y="91" width="178" height="1" fill="#5e5e5e"/><rect x="78" y="83" width="154" height="1" fill="#6a6a6a"/><rect x="78" y="300" width="154" height="1" fill="#5e5e5e"/><rect x="78" y="302" width="154" height="1" fill="#5e5e5e"/><rect x="130" y="305" width="50" height="1" fill="#6a6a6a"/><rect x="81.5" y="94.5" width="63" height="47" fill="none" stroke="#5e5e5e" stroke-width="1"/><rect x="87" y="94" width="1" height="47" fill="#5e5e5e"/><rect x="138" y="94" width="1" height="47" fill="#5e5e5e"/><rect x="82.5" y="95.5" width="61" height="45" fill="none" stroke="#6c6c6c" stroke-width="1"/><rect x="155.5" y="92.5" width="86" height="47" fill="none" stroke="#5e5e5e" stroke-width="1"/><rect x="155" y="142" width="86" height="1" fill="#5e5e5e"/><rect x="156.5" y="93.5" width="84" height="45" fill="none" stroke="#6e6e6e" stroke-width="1"/><path d="M63.2 101 V86.8 H78 M232 86.8 H246.8 V101 M63.2 286.5 V300.2 H78 M232 300.2 H246.8 V286.5" fill="none" stroke="#f00000" stroke-width="1.7" shape-rendering="geometricPrecision"/><rect x="155" y="194" width="101" height="1" fill="#e02020"/></g><g clip-path="url(#c2)"><rect x="465" y="62" width="1" height="36" fill="#000"/><rect x="465" y="98" width="1" height="18" fill="#6a6a6a"/><rect x="313" y="305" width="302" height="1" fill="#000"/><rect x="465" y="300" width="1" height="24" fill="#000"/><rect x="420.5" y="82.5" width="90" height="6" fill="none" stroke="#5e5e5e" stroke-width="1"/><rect x="456.5" y="83.5" width="18" height="4" fill="#868686" stroke="#666" stroke-width="1"/><rect x="422" y="88" width="1" height="28" fill="#5e5e5e"/><rect x="429" y="88" width="1" height="28" fill="#5e5e5e"/><rect x="501" y="88" width="1" height="28" fill="#5e5e5e"/><rect x="506" y="88" width="1" height="28" fill="#5e5e5e"/><rect x="509" y="88" width="1" height="28" fill="#5e5e5e"/><rect x="420" y="107" width="91" height="1" fill="#5e5e5e"/><rect x="429" y="114" width="73" height="1" fill="#5e5e5e"/><rect x="420" y="82" width="1" height="222" fill="#5e5e5e"/><rect x="510" y="82" width="1" height="222" fill="#5e5e5e"/><rect x="422" y="116" width="87.5" height="165" fill="#ff0000"/><rect x="429.5" y="116" width="1.5" height="165" fill="#6e6e6e"/><rect x="432.5" y="116" width="2.5" height="165" fill="#6e6e6e"/><rect x="460" y="116" width="2" height="165" fill="#6e6e6e"/><rect x="464.5" y="116" width="2.0" height="165" fill="#6e6e6e"/><rect x="468" y="116" width="2" height="165" fill="#6e6e6e"/><rect x="494.5" y="116" width="2.0" height="165" fill="#6e6e6e"/><rect x="498.5" y="116" width="3.5" height="165" fill="#6e6e6e"/><rect x="435" y="117" width="25" height="1.5" fill="#6e6e6e"/><rect x="470" y="117" width="24.5" height="1.5" fill="#6e6e6e"/><rect x="435" y="193" width="25" height="2" fill="#6e6e6e"/><rect x="470" y="193" width="24.5" height="2" fill="#6e6e6e"/><rect x="435" y="205" width="25" height="2" fill="#6e6e6e"/><rect x="470" y="205" width="24.5" height="2" fill="#6e6e6e"/><rect x="435" y="279" width="25" height="2" fill="#6e6e6e"/><rect x="470" y="279" width="24.5" height="2" fill="#6e6e6e"/><rect x="422" y="281" width="1" height="19" fill="#5e5e5e"/><rect x="429" y="281" width="1" height="19" fill="#5e5e5e"/><rect x="432" y="281" width="1" height="19" fill="#5e5e5e"/><rect x="434" y="281" width="1" height="19" fill="#5e5e5e"/><rect x="460" y="281" width="1" height="19" fill="#5e5e5e"/><rect x="464" y="281" width="1" height="19" fill="#5e5e5e"/><rect x="468" y="281" width="1" height="19" fill="#5e5e5e"/><rect x="494" y="281" width="1" height="19" fill="#5e5e5e"/><rect x="498" y="281" width="1" height="19" fill="#5e5e5e"/><rect x="501" y="281" width="1" height="19" fill="#5e5e5e"/><rect x="506" y="281" width="1" height="19" fill="#5e5e5e"/><rect x="509" y="281" width="1" height="19" fill="#5e5e5e"/><rect x="420.5" y="300.5" width="90" height="4" fill="#747474" stroke="#5e5e5e" stroke-width="1"/><rect x="466" y="198" width="98" height="1" fill="#e02020"/></g><g clip-path="url(#c3)"><rect x="154" y="332" width="1" height="36" fill="#000"/><rect x="154" y="545" width="1" height="49" fill="#000"/><rect x="2" y="575" width="100" height="1" fill="#000"/><rect x="208" y="575" width="97" height="1" fill="#000"/><rect x="102.5" y="352.5" width="105" height="6" fill="none" stroke="#5e5e5e" stroke-width="1"/><rect x="104" y="358" width="1" height="28" fill="#5e5e5e"/><rect x="106" y="358" width="1" height="28" fill="#5e5e5e"/><rect x="111" y="358" width="1" height="28" fill="#5e5e5e"/><rect x="197" y="358" width="1" height="28" fill="#5e5e5e"/><rect x="203" y="358" width="1" height="28" fill="#5e5e5e"/><rect x="206" y="358" width="1" height="28" fill="#5e5e5e"/><rect x="102" y="377" width="106" height="1" fill="#5e5e5e"/><rect x="102" y="352" width="1" height="223" fill="#5e5e5e"/><rect x="207" y="352" width="1" height="223" fill="#5e5e5e"/><rect x="104" y="386" width="102" height="165" fill="#ff0000"/><rect x="111" y="386" width="1" height="165" fill="#707070"/><rect x="197" y="386" width="1" height="165" fill="#707070"/><rect x="112" y="386" width="1" height="165" fill="#b04040"/><rect x="198" y="386" width="1" height="165" fill="#b04040"/><rect x="111" y="388" width="87" height="1.5" fill="#6e6e6e"/><rect x="111" y="463" width="87" height="1.5" fill="#6e6e6e"/><rect x="111" y="475" width="87" height="1.5" fill="#6e6e6e"/><rect x="111" y="543" width="87" height="1.5" fill="#6e6e6e"/><rect x="111" y="547" width="87" height="1.5" fill="#6e6e6e"/><rect x="55" y="468" width="100" height="1" fill="#6e6e6e"/><rect x="154" y="368" width="1" height="100" fill="#6e6e6e"/><rect x="154" y="474" width="1" height="2" fill="#000"/><rect x="104" y="551" width="1" height="19" fill="#5e5e5e"/><rect x="106" y="551" width="1" height="19" fill="#5e5e5e"/><rect x="111" y="551" width="1" height="19" fill="#5e5e5e"/><rect x="197" y="551" width="1" height="19" fill="#5e5e5e"/><rect x="203" y="551" width="1" height="19" fill="#5e5e5e"/><rect x="206" y="551" width="1" height="19" fill="#5e5e5e"/><rect x="102.5" y="570.5" width="105" height="5" fill="#767676" stroke="#5e5e5e" stroke-width="1"/></g></svg>
<svg style="left:0;top:0" width="802" height="704"><g clip-path="url(#c4)"><path d="M313 361 L400 336 M520 336 L615 362" stroke="#868686" stroke-width="1" fill="none"/><path d="M313 420 L466 532 M380 594 L615 422.5 M466 532 L550 594" stroke="#000" stroke-width="1.1" fill="none"/><ellipse cx="563.5" cy="403.5" rx="29.5" ry="18.5" fill="#848484" stroke="#8c8c8c" stroke-width="5"/><path d="M561 365.5 L541 376 L560.5 387 L580.5 376 Z" fill="#9c9c9c"/><path d="M541 376 L560.5 387 L560.5 410 L542.5 398 Z" fill="#989898"/><path d="M580.5 376 L560.5 387 L560.5 410 L580 398.5 Z" fill="#929292"/><path d="M541 376 L560.5 387 L580.5 376 M560.5 387 V410" stroke="#a4a4a4" stroke-width="0.8" fill="none"/><path d="M552 373 L560 369 L569 373.5 L561 378 Z M546 385 L555 390 V398 L546 392.5Z M566 390 L575 385 V392.5 L566 398Z" fill="#929292" opacity="0.7"/><path d="M415 516 L410 521 L468 575.5 L522.5 530 L518 524 M410 521 V514 M468 575.5 V556 M522.5 530 V521 M413 524 L468 571 L520 532" stroke="#5a5a5a" stroke-width="1.2" fill="none"/><path d="M412 519 L466 563 L519 527 M418 522 L421 530 M430 531 L433 540 M445 543 L447 552 M480 552 L481 562 M495 542 L496 552 M508 533 L509 542" stroke="#9c9c9c" stroke-width="1" fill="none"/><path d="M437.5 417.5 L454.5 409.5 M425 409 L455 396" stroke="#727272" stroke-width="1" fill="none"/><path d="M401.3 401 L462.5 432.5 L464.5 556 L415.5 516.5 Z" fill="#7a0000"/><path d="M401.3 400.2 L462.5 431.5 L462.5 433.5 L401.3 402.2Z" fill="#f00000"/><path d="M399.5 398.5 L402 401 L416.5 516.5 L414 514 Z" fill="#e80000"/><path d="M462.5 432.5 L470 433.5 L471 556 L464.5 556 Z" fill="#c00000"/><path d="M470 433.5 L476.5 430.5 L475.5 551 L471 556 Z" fill="#e40000"/><path d="M476.5 430.5 L529 405 L518.5 523 L475.5 551 Z" fill="#7c7c7c"/><path d="M498.5 423.5 L505.5 419.5 L499 533.5 L493 538 Z M520.5 411.5 L525 408.5 L517.5 500 L513 523.5 Z M476.5 430.5 L481 431.5 L479.5 548.5 L475.5 551 Z" fill="#6c6c6c"/><path d="M481 431.5 L498.5 423.5 L493 538 L479.5 548.5 Z" fill="#dc0000"/><path d="M505.5 419.5 L520.5 411.5 L513 523.5 L499 533.5 Z" fill="#dc0000"/><path d="M525 408.5 L529 405 L520 497 L517.5 498 Z" fill="#dc0000"/><path d="M479 494 L516 469.5 L516 475 L479 499.5 Z" fill="#787878"/><path d="M479 496.5 L516 472" stroke="#d00000" stroke-width="1.6"/><path d="M464 447 L478 447 L527 424" stroke="#f02020" stroke-width="0.8" fill="none"/><path d="M404.5 431 L462 462.5 M410.5 468.5 L462 498 M412 475.5 L462.5 505.5" stroke="#8c7c7c" stroke-width="1.2" fill="none"/><path d="M406.5 397.5 L462 425.5" stroke="#6a6a6a" stroke-width="3.2" stroke-dasharray="1.6 0.8" fill="none"/><path d="M477.5 423 L523.5 401" stroke="#6a6a6a" stroke-width="3.2" stroke-dasharray="1.6 0.8" fill="none"/><path d="M408.5 389 L453.5 374 M465.5 373.5 L522 394.5" stroke="#6a6a6a" stroke-width="2.4" stroke-dasharray="1.6 0.8" fill="none"/><path d="M406.5 380 L470 407 M476.5 404.5 L531.5 381" stroke="#5a5a5a" stroke-width="2.4" fill="none"/><path d="M395.3 370 L401.3 400.5 L411 520 M398.5 374 L404.5 402 L414 516 M402 378 L407 400" stroke="#5a5a5a" stroke-width="1.2" fill="none"/><path d="M454.8 356 V430 M458.5 354 V431 M461.5 354 V432 M465.3 356 V433" stroke="#5a5a5a" stroke-width="1.1" fill="none"/><path d="M470.3 406 L471 574 M474 409 L473.5 572 M477.8 408 L476.5 560 M464 433 L466 575" stroke="#5a5a5a" stroke-width="1.2" fill="none"/><path d="M535.3 375 L522.5 530 M532.5 379 L519.5 526 M528.5 381 L524 409 M524.5 383 L517 498 L514 523" stroke="#5a5a5a" stroke-width="1.2" fill="none"/><path d="M500 423 L494.5 545 M504 420.5 L498 540 M479.5 432 L478 552 M521.5 411 L514 524" stroke="#5a5a5a" stroke-width="1.3" stroke-dasharray="5 1.2" fill="none"/><path d="M459.8 349 L395.3 370 L470.6 406 L535.3 374.5 Z" stroke="#5a5a5a" stroke-width="1.2" fill="none"/><path d="M456 355.5 L397 374.5 L470.6 410 L533.8 379 L463.5 356.3" stroke="#5a5a5a" stroke-width="1.1" fill="none"/><path d="M395.3 370 L397 374.5 M470.6 406 V410 M535.3 374.5 L533.8 379" stroke="#5a5a5a" stroke-width="1.1" fill="none"/><path d="M426 383 L488 408 M446 394 L505 372 M448 366 L512 393" stroke="#5a5a5a" stroke-width="1.1" fill="none"/><path d="M411.5 396.8 L425 391.6 M432 389 L457.5 379.2 L461 379 M465 380 L493.5 391.5 M500.5 394.3 L517.5 401" stroke="#f01010" stroke-width="1.4" fill="none"/></g></svg>
<span class="t " style="left:8.0px;top:64.1px;font-size:12px;color:#d8d8d8;transform:scaleX(0.956);">Top</span>
<span class="t " style="left:318.0px;top:64.1px;font-size:12px;color:#d8d8d8;transform:scaleX(1.000);">Front</span>
<span class="t " style="left:8.0px;top:334.1px;font-size:12px;color:#d8d8d8;transform:scaleX(0.999);">Left</span>
<span class="t " style="left:318.0px;top:334.1px;font-size:12px;color:#d8d8d8;transform:scaleX(0.925);">Perspective</span>
<svg style="left:0;top:0" width="802" height="704" shape-rendering="crispEdges"><rect x="28" y="275" width="1" height="25" fill="#10b010"/><rect x="28" y="299" width="25" height="1" fill="#e01818"/><rect x="338" y="275" width="1" height="25" fill="#1818e0"/><rect x="338" y="299" width="25" height="1" fill="#e01818"/><rect x="28" y="545" width="1" height="25" fill="#1818e0"/><rect x="4" y="569" width="25" height="1" fill="#10b010"/></svg>
<svg style="left:0;top:0" width="802" height="704"><path d="M338.5 569 V550.5" stroke="#1818e0" stroke-width="1.2"/><path d="M338.5 569 L356 560" stroke="#e01818" stroke-width="1.2"/><path d="M338.5 569 L322 560" stroke="#10b010" stroke-width="1.2"/></svg>
<span class="t " style="left:28.0px;top:260.9px;font-size:10px;color:#10b010;transform:scaleX(1.000);font-weight:bold">y</span>
<span class="t " style="left:28.5px;top:285.9px;font-size:10px;color:#1818e0;transform:scaleX(1.000);font-weight:bold">z</span>
<span class="t " style="left:53.5px;top:285.9px;font-size:10px;color:#e01818;transform:scaleX(1.000);font-weight:bold">x</span>
<span class="t " style="left:338.5px;top:260.9px;font-size:10px;color:#1818e0;transform:scaleX(1.000);font-weight:bold">z</span>
<span class="t " style="left:338.0px;top:285.9px;font-size:10px;color:#10b010;transform:scaleX(1.000);font-weight:bold">y</span>
<span class="t " style="left:363.5px;top:285.9px;font-size:10px;color:#e01818;transform:scaleX(1.000);font-weight:bold">x</span>
<span class="t " style="left:28.5px;top:531.0px;font-size:10px;color:#1818e0;transform:scaleX(1.000);font-weight:bold">z</span>
<span class="t " style="left:4.0px;top:556.0px;font-size:10px;color:#10b010;transform:scaleX(1.000);font-weight:bold">y</span>
<span class="t " style="left:29.0px;top:556.0px;font-size:10px;color:#e01818;transform:scaleX(1.000);font-weight:bold">x</span>
<span class="t " style="left:338.5px;top:536.0px;font-size:10px;color:#1818e0;transform:scaleX(1.000);font-weight:bold">z</span>
<span class="t " style="left:321.0px;top:546.0px;font-size:10px;color:#10b010;transform:scaleX(1.000);font-weight:bold">y</span>
<span class="t " style="left:357.0px;top:546.0px;font-size:10px;color:#e01818;transform:scaleX(1.000);font-weight:bold">x</span>
<span class="t " style="left:254.0px;top:181.4px;font-size:9px;color:#e02020;transform:scaleX(1.000);font-weight:bold">x</span>
<span class="t " style="left:156.5px;top:181.4px;font-size:9px;color:#6a6a6a;transform:scaleX(1.000);">z</span>
<span class="t " style="left:564.5px;top:183.9px;font-size:10px;color:#e02020;transform:scaleX(1.000);font-weight:bold">x</span>
<span class="t " style="left:55.0px;top:454.4px;font-size:9px;color:#6a6a6a;transform:scaleX(1.000);">y</span>
</div>
</body></html>
